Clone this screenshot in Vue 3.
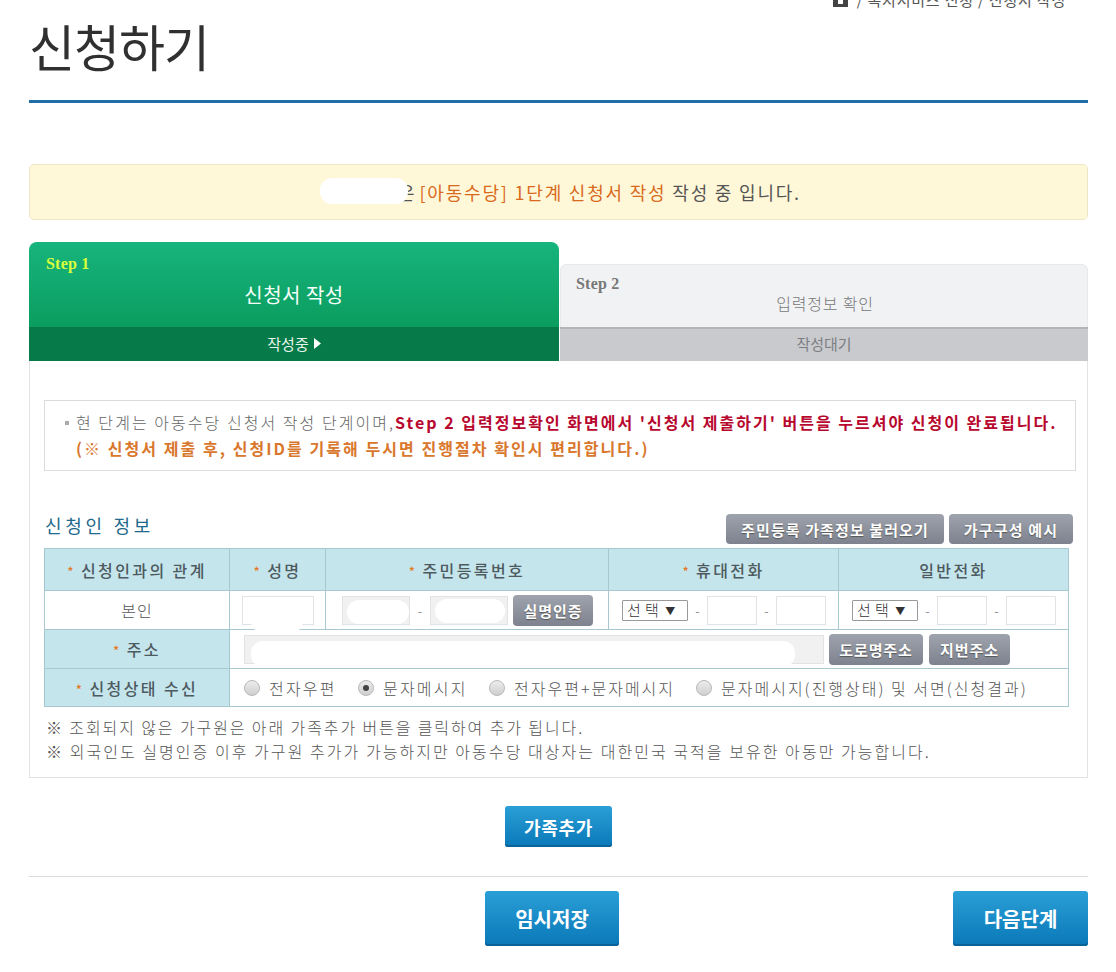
<script setup>
const radios = [
  { label: '전자우편', on: false },
  { label: '문자메시지', on: true },
  { label: '전자우편+문자메시지', on: false },
  { label: '문자메시지(진행상태) 및 서면(신청결과)', on: false }
]
</script>

<template>
  <div class="page">
    <div class="crumb">
      <svg class="home" viewBox="0 0 15 15" width="15" height="15"><rect width="15" height="15" fill="#444"/><rect x="5" y="5" width="5" height="7" fill="#fff"/></svg>
      <span>/ 복지서비스 신청 / 신청서 작성</span>
    </div>
    <h1 class="title">신청하기</h1>
    <div class="rule"></div>

    <div class="banner">
      <span class="blob-wrap">은<span class="blob"></span></span>
      <span class="orange">[아동수당] 1단계 신청서 작성</span> 작성 중 입니다.
    </div>

    <div class="tabs">
      <div class="tab active">
        <div class="tab-top">
          <div class="step">Step 1</div>
          <div class="tab-name">신청서 작성</div>
        </div>
        <div class="tab-state">작성중 <svg viewBox="0 0 7 11" width="7" height="11"><path d="M0 0 L7 5.5 L0 11Z" fill="#fff"/></svg></div>
      </div>
      <div class="tab waiting">
        <div class="tab-top">
          <div class="step">Step 2</div>
          <div class="tab-name">입력정보 확인</div>
        </div>
        <div class="tab-state">작성대기</div>
      </div>
    </div>

    <div class="panel">
      <div class="guide">
        <p><span class="sq"></span>현 단계는 아동수당 신청서 작성 단계이며,<b class="red">Step 2 입력정보확인 화면에서 '신청서 제출하기' 버튼을 누르셔야 신청이 완료됩니다.</b></p>
        <p class="orange-b">(※ 신청서 제출 후, 신청ID를 기록해 두시면 진행절차 확인시 편리합니다.)</p>
      </div>

      <div class="sec-head">
        <h2>신청인 정보</h2>
        <div class="sec-btns">
          <button class="gray wide">주민등록 가족정보 불러오기</button>
          <button class="gray ex">가구구성 예시</button>
        </div>
      </div>

      <table class="form">
        <colgroup>
          <col class="c1" /><col class="c2" /><col class="c3" /><col class="c4" /><col />
        </colgroup>
        <tbody>
          <tr class="r-head">
            <th><i>*</i>신청인과의 관계</th>
            <th><i>*</i>성명</th>
            <th><i>*</i>주민등록번호</th>
            <th><i>*</i>휴대전화</th>
            <th>일반전화</th>
          </tr>
          <tr class="r-1">
            <td class="center">본인</td>
            <td class="center"><span class="inp name"><span class="blob b0"></span></span></td>
            <td>
              <div class="line jumin">
                <span class="inp ro j1"><span class="blob b1"></span></span>
                <span class="dash">-</span>
                <span class="inp ro j2"><span class="blob b2"></span></span>
                <button class="gray small">실명인증</button>
              </div>
            </td>
            <td>
              <div class="line phone">
                <span class="sel">선 택 <em>▼</em></span><span class="dash">-</span><span class="inp tel"></span><span class="dash">-</span><span class="inp tel"></span>
              </div>
            </td>
            <td>
              <div class="line phone">
                <span class="sel">선 택 <em>▼</em></span><span class="dash">-</span><span class="inp tel"></span><span class="dash">-</span><span class="inp tel"></span>
              </div>
            </td>
          </tr>
          <tr class="r-2">
            <th><i>*</i>주소</th>
            <td colspan="4">
              <div class="line addr">
                <span class="inp ro address"><span class="blob b3"></span></span>
                <button class="gray small">도로명주소</button>
                <button class="gray small">지번주소</button>
              </div>
            </td>
          </tr>
          <tr class="r-3">
            <th><i>*</i>신청상태 수신</th>
            <td colspan="4">
              <div class="radios">
                <label v-for="r in radios" :key="r.label" class="radio">
                  <span class="dot" :class="{ on: r.on }"></span>{{ r.label }}
                </label>
              </div>
            </td>
          </tr>
        </tbody>
      </table>

      <div class="notes">
        <p>※ 조회되지 않은 가구원은 아래 가족추가 버튼을 클릭하여 추가 됩니다.</p>
        <p>※ 외국인도 실명인증 이후 가구원 추가가 가능하지만 아동수당 대상자는 대한민국 국적을 보유한 아동만 가능합니다.</p>
      </div>
    </div>

    <div class="add-row"><button class="blue add">가족추가</button></div>
    <div class="foot">
      <button class="blue big save">임시저장</button>
      <button class="blue big">다음단계</button>
    </div>
  </div>
</template>

<style>
html, body { margin: 0; background: #fff; overflow: hidden; }
</style>

<style scoped>
.page {
  width: 1059px;
  height: 972px;
  padding-left: 29px;
  font-family: "Noto Sans CJK KR", "Noto Sans", sans-serif;
  color: #444;
  position: relative;
  overflow: hidden;
}
p { margin: 0; }
button { font-family: inherit; border: 0; padding: 0; cursor: pointer; }
.crumb {
  display: flex;
  align-items: center;
  gap: 9px;
  justify-content: flex-end;
  padding-right: 22px;
  height: 15px;
  margin-top: -8px;
  font-size: 15px;
  letter-spacing: 0.8px;
  color: #555;
  white-space: nowrap;
}
.home { flex: none; }
.title {
  margin: 7px 0 0;
  font-size: 50px;
  line-height: 62px;
  height: 62px;
  font-weight: 400;
  letter-spacing: -1px;
  color: #303030;
}
.rule {
  height: 3px;
  margin-top: 24px;
  background: #1f6ea8;
}
.banner {
  margin-top: 61px;
  height: 56px;
  box-sizing: border-box;
  border: 1px solid #efe6c6;
  border-radius: 5px;
  background: #fff8d8;
  text-align: center;
  font-size: 18px;
  line-height: 55px;
  letter-spacing: 1.8px;
  color: #555;
  padding-left: 8px;
}
.blob-wrap { position: relative; padding-left: 74px; margin-right: 3px; }
.blob {
  position: absolute;
  background: #fff;
  border-radius: 12px;
}
.blob-wrap .blob { left: -4px; top: -1px; width: 88px; height: 26px; }
.orange { color: #d96a1d; }
.tabs {
  margin-top: 22px;
  display: flex;
  align-items: flex-end;
  gap: 1px;
}
.tab { flex: 1 1 0; }
.tab-top { box-sizing: border-box; }
.tab.active { flex: 0 0 530px; }
.tab.active .tab-top {
  height: 85px;
  border-radius: 8px 8px 0 0;
  background: linear-gradient(#17b47d, #0b9d5f);
  padding: 13px 17px 0;
  color: #fff;
}
.tab.waiting .tab-top {
  height: 63px;
  border-radius: 6px 6px 0 0;
  border: 1px solid #e8e9eb;
  border-bottom: 0;
  background: #f1f2f4;
  padding: 10px 15px 0;
  color: #777;
}
.step {
  font-family: "Liberation Serif", serif;
  font-weight: 700;
  font-size: 16px;
  line-height: 18px;
  letter-spacing: 0.2px;
}
.active .step { color: #d8ff3c; }
.waiting .step { color: #777; }
.tab-name { text-align: center; }
.active .tab-name { font-size: 20px; line-height: 28px; margin-top: 8px; color: #f4fff9; letter-spacing: 0.5px; }
.waiting .tab-name { font-size: 16px; line-height: 22px; margin-top: -1px; font-weight: 300; letter-spacing: 0.8px; padding-left: 2px; }
.tab-state {
  height: 34px;
  font-size: 15px;
  display: flex;
  align-items: center;
  justify-content: center;
  gap: 5px;
}
.active .tab-state { background: #067a48; color: #e8f5ee; padding-bottom: 2px; box-sizing: border-box; }
.waiting .tab-state {
  box-sizing: border-box;
  background: #c9cace;
  border-top: 2px solid #b4b5b8;
  color: #7d7e82;
  padding-bottom: 3px;
}
.panel {
  box-sizing: border-box;
  height: 417px;
  border: 1px solid #e2e3e5;
  border-top: 0;
  padding: 39px 11px 0 14px;
}
.guide {
  box-sizing: border-box;
  width: 1032px;
  height: 71px;
  border: 1px solid #dcdcdc;
  padding: 8px 0 0 20px;
  font-size: 16px;
  line-height: 26px;
  letter-spacing: 2.05px;
  color: #666;
  font-weight: 300;
  white-space: nowrap;
}
.sq {
  display: inline-block;
  width: 4px;
  height: 4px;
  background: #aaa;
  margin: 0 7px 4px 0;
}
.red { color: #b8072e; font-weight: 700; letter-spacing: 2px; }
.orange-b { color: #d9772d; font-weight: 700; padding-left: 11px; letter-spacing: 2.05px; }
.sec-head {
  display: flex;
  align-items: flex-end;
  justify-content: space-between;
  width: 1029px;
  margin-top: 43px;
  height: 30px;
}
.sec-head h2 {
  margin: 0 0 8px 1px;
  font-size: 18px;
  line-height: 22px;
  font-weight: 400;
  color: #1f6a8c;
  letter-spacing: 3.7px;
}
.sec-btns { display: flex; gap: 5px; }
.gray {
  height: 30px;
  border-radius: 4px;
  background: linear-gradient(#9ea3ad, #7d828e);
  color: #fff;
  font-weight: 700;
  font-size: 15px;
  text-shadow: 0 1px 1px #555;
}
.gray.wide { width: 218px; letter-spacing: 1.1px; }
.gray.ex { width: 124px; letter-spacing: 1.2px; }
.form {
  margin-top: 4px;
  width: 1025px;
  table-layout: fixed;
  border-collapse: collapse;
  font-size: 16px;
  color: #555;
}
.c1 { width: 185px; }
.c2 { width: 96px; }
.c3 { width: 283px; }
.c4 { width: 230px; }
.form th, .form td {
  border: 1px solid #a7c8d0;
  padding: 0;
  box-sizing: border-box;
}
.form th {
  background: #c5e5ec;
  font-weight: 500;
  font-size: 16px;
  color: #4d5a60;
  letter-spacing: 2.4px;
  white-space: nowrap;
}
.form td { font-weight: 300; }
.form i { font-style: normal; color: #e27a2a; font-size: 13px; margin-right: 5px; }
.r-head { height: 42px; }
.r-1 { height: 39px; }
.r-2 { height: 39px; }
.r-3 { height: 38px; }
.center { text-align: center; letter-spacing: 1px; }
.inp {
  display: inline-block;
  box-sizing: border-box;
  height: 29px;
  border: 1px solid #e2e3e5;
  background: #fff;
  position: relative;
  vertical-align: middle;
  overflow: hidden;
}
.inp.ro { background: #f1f1f1; }
.inp.name { width: 72px; overflow: visible; }
.inp.j1 { width: 68px; }
.inp.j2 { width: 78px; }
.inp.tel { width: 50px; }
.inp.address { width: 580px; overflow: visible; }
.line { display: flex; align-items: center; }
.jumin { padding-left: 16px; }
.jumin .dash { width: 20px; text-align: center; }
.jumin .small { margin-left: 5px; width: 80px; }
.phone { padding-left: 13px; }
.phone .dash { width: 19px; text-align: center; }
.dash { color: #666; font-size: 13px; }
.sel {
  box-sizing: border-box;
  width: 66px;
  height: 21px;
  border: 1px solid #999;
  border-radius: 1px;
  font-size: 15px;
  line-height: 18px;
  padding-left: 4px;
  color: #333;
  white-space: nowrap;
  letter-spacing: 0.5px;
}
.sel em { font-style: normal; font-size: 10px; margin-left: 2px; position: relative; top: -1px; }
.gray.small { height: 31px; flex: none; letter-spacing: 0.9px; }
.addr { padding-left: 14px; }
.addr .small { width: 94px; margin-left: 5px; }
.addr .small:last-child { width: 81px; margin-left: 6px; }
.b0 { left: 8px; top: 8px; width: 52px; height: 28px; }
.b1 { left: 4px; top: 3px; width: 62px; height: 24px; }
.b2 { left: 4px; top: 2px; width: 70px; height: 24px; }
.b3 { left: 6px; top: 5px; width: 544px; height: 26px; }
.radios { display: flex; padding-left: 14px; font-size: 16px; }
.radio { display: flex; align-items: center; gap: 9px; white-space: nowrap; letter-spacing: 2.2px; }
.radio:nth-child(1) { width: 114px; }
.radio:nth-child(2) { width: 131px; }
.radio:nth-child(3) { width: 207px; letter-spacing: 2px; }
.radio:nth-child(4) { letter-spacing: 2px; }
.dot {
  width: 16px;
  height: 16px;
  box-sizing: border-box;
  border-radius: 50%;
  border: 1px solid #b9b9b9;
  background: linear-gradient(#ececec, #cfcfcf);
  position: relative;
  flex: none;
}
.dot.on::after {
  content: "";
  position: absolute;
  left: 4px;
  top: 4px;
  width: 6px;
  height: 6px;
  border-radius: 50%;
  background: #444;
}
.notes {
  margin-top: 8px;
  margin-left: 2px;
  font-size: 16px;
  line-height: 24px;
  color: #555;
  font-weight: 300;
  letter-spacing: 1.9px;
  white-space: nowrap;
}
.notes p + p { letter-spacing: 2.05px; }
.blue {
  background: linear-gradient(#2a9fd6, #0a78b8);
  color: #fff;
  border-radius: 3px;
  font-weight: 700;
  box-shadow: inset 0 -2px 0 #0b6296;
}
.add-row { margin-top: 28px; padding-left: 476px; }
.add { width: 107px; height: 41px; font-size: 18px; letter-spacing: 0.7px; }
.foot {
  margin-top: 29px;
  border-top: 1px solid #dcdcdc;
  padding-top: 14px;
  display: flex;
  justify-content: space-between;
  padding-left: 456px;
}
.big { width: 135px; height: 55px; font-size: 20px; }
.big.save { width: 134px; }
</style>
